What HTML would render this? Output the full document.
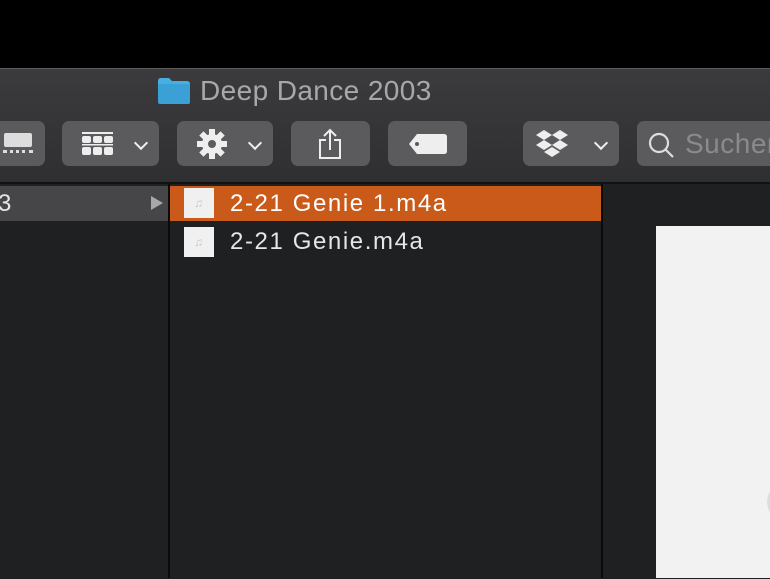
<!DOCTYPE html>
<html><head><style>
body{margin:0;width:770px;height:578px;background:#000;overflow:hidden;position:relative;font-family:"Liberation Sans",sans-serif}
.a{position:absolute}
.win{left:0;top:68px;width:770px;height:510px;background:#1f2022;border-top:1px solid #555}
.tb{left:0;top:68px;width:770px;height:115px;background:linear-gradient(#3b3b3d,#2f2f31);border-top:1px solid #5a5a5a}
.btn{top:121px;height:45px;background:#5b5b5d;border-radius:7px}
.chev{position:absolute;top:17px;width:8px;height:8px;border-right:2.5px solid #eee;border-bottom:2.5px solid #eee;transform:rotate(45deg)}
.row{font-size:24px;color:#e6e6e6;letter-spacing:1.6px}
</style></head><body>
<div class="a win"></div>
<div class="a tb"></div>
<div class="a" style="left:0;top:182px;width:770px;height:2px;background:#111"></div>
<svg class="a" style="left:158px;top:78px" width="32" height="26"><path d="M0 3 Q0 0 3 0 H11 L14 3 H29 Q32 3 32 6 V23 Q32 26 29 26 H3 Q0 26 0 23Z" fill="#46aee0"/><rect x="0" y="6" width="32" height="20" rx="2" fill="#3aa0d6"/></svg>
<div class="a" style="left:200px;top:75px;font-size:28px;letter-spacing:0.4px;color:#a8a8a8">Deep Dance 2003</div>
<div class="a btn" style="left:-10px;width:55px"><div class="a" style="left:14px;top:12px;width:28px;height:14px;background:#ddd;border-radius:2px"></div><div class="a" style="left:13px;top:29px;width:30px;height:3px;border-top:3px dotted #ddd"></div></div>
<div class="a btn" style="left:62px;width:97px">
<svg class="a" style="left:20px;top:11px" width="32" height="24" fill="#eee"><rect x="0" y="0" width="31" height="2"/><rect x="0" y="4" width="9" height="7" rx="2"/><rect x="11" y="4" width="9" height="7" rx="2"/><rect x="22" y="4" width="9" height="7" rx="2"/><rect x="0" y="12" width="31" height="1.5"/><rect x="0" y="15" width="9" height="8" rx="2"/><rect x="11" y="15" width="9" height="8" rx="2"/><rect x="22" y="15" width="9" height="8" rx="2"/></svg>
<div class="chev" style="left:74px"></div></div>
<div class="a btn" style="left:177px;width:96px">
<svg class="a" style="left:19px;top:7px" width="32" height="32" viewBox="-16 -16 32 32" fill="#eee"><g><rect x="-3" y="-15" width="6" height="30"/><rect x="-3" y="-15" width="6" height="30" transform="rotate(45)"/><rect x="-3" y="-15" width="6" height="30" transform="rotate(90)"/><rect x="-3" y="-15" width="6" height="30" transform="rotate(135)"/></g><circle r="10"/><circle r="4" fill="#5b5b5d"/></svg>
<div class="chev" style="left:73px"></div></div>
<div class="a btn" style="left:291px;width:79px">
<svg class="a" style="left:27px;top:7px" width="26" height="32" fill="none" stroke="#eee" stroke-width="2"><path d="M8 12 H2 V30 H22 V12 H16 M12 22 V2 M6 8 L12 2 L18 8"/></svg></div>
<div class="a btn" style="left:388px;width:79px">
<svg class="a" style="left:21px;top:13px" width="38" height="20"><path d="M8 0 H35 Q38 0 38 3 V17 Q38 20 35 20 H8 L0 10Z" fill="#eee"/><circle cx="8" cy="10" r="2" fill="#5b5b5d"/></svg></div>
<div class="a btn" style="left:523px;width:96px">
<svg class="a" style="left:12px;top:9px" width="34" height="28" fill="#eee"><path d="M9 0 L17 5 L9 10 L1 5Z M25 0 L33 5 L25 10 L17 5Z M9 10 L17 15 L9 20 L1 15Z M25 10 L33 15 L25 20 L17 15Z M17 17 L25 22 L17 27 L9 22Z"/></svg>
<div class="chev" style="left:73px"></div></div>
<div class="a btn" style="left:637px;width:150px">
<svg class="a" style="left:10px;top:10px" width="28" height="28" fill="none" stroke="#ddd" stroke-width="2.2"><circle cx="12" cy="12" r="9"/><path d="M18.5 18.5 L26 26"/></svg>
<div class="a" style="left:48px;top:7px;font-size:28px;letter-spacing:0.5px;color:#8a8a8c">Suchen</div></div>
<div class="a" style="left:0;top:186px;width:168px;height:35px;background:#464648"></div>
<div class="a row" style="left:-2px;top:190px">3</div>
<div class="a" style="left:151px;top:196px;width:0;height:0;border-left:12px solid #a8a8a8;border-top:7px solid transparent;border-bottom:7px solid transparent"></div>
<div class="a" style="left:168px;top:184px;width:2px;height:394px;background:#0a0a0a"></div>
<div class="a" style="left:170px;top:186px;width:431px;height:35px;background:#c95a19"></div>
<div class="a" style="left:184px;top:188px;width:30px;height:30px;background:#f0f0f0"><div class="a" style="left:10px;top:8px;font-size:12px;color:#c8c8c8">♫</div></div>
<div class="a row" style="left:230px;top:190px;color:#fff">2-21 Genie 1.m4a</div>
<div class="a" style="left:184px;top:227px;width:30px;height:30px;background:#f0f0f0"><div class="a" style="left:10px;top:8px;font-size:12px;color:#c8c8c8">♫</div></div>
<div class="a row" style="left:230px;top:228px">2-21 Genie.m4a</div>
<div class="a" style="left:601px;top:184px;width:2px;height:394px;background:#0a0a0a"></div>
<div class="a" style="left:656px;top:226px;width:114px;height:352px;background:#f2f2f2"></div>
<div class="a" style="left:767px;top:482px;width:40px;height:40px;border-radius:50%;background:#ddd"></div>
</body></html>
